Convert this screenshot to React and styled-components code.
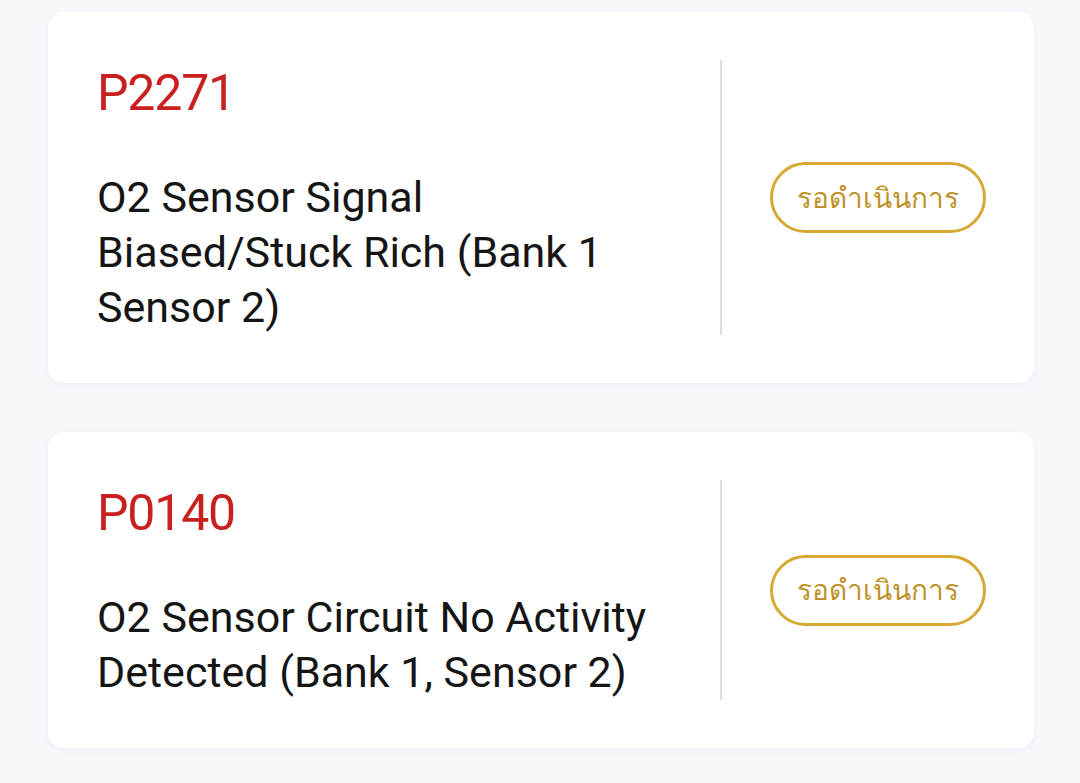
import React from 'react';
import styled, { createGlobalStyle } from 'styled-components';

const GlobalStyle = createGlobalStyle`
  body {
    margin: 0;
    background: #f5f7fb;
    font-family: Roboto, "Noto Sans", "Liberation Sans", sans-serif;
  }
`;

const codes = [
  {
    code: 'P2271',
    text: 'O2 Sensor Signal Biased/Stuck Rich (Bank 1 Sensor 2)',
    status: 'รอดำเนินการ',
  },
  {
    code: 'P0140',
    text: 'O2 Sensor Circuit No Activity Detected (Bank 1, Sensor 2)',
    status: 'รอดำเนินการ',
  },
];

export default function App() {
  return (
    <>
      <GlobalStyle />
      <List>
        {codes.map((item) => (
          <Card key={item.code}>
            <Info>
              <Code>{item.code}</Code>
              <Desc>{item.text}</Desc>
            </Info>
            <Divider />
            <Side>
              <Badge>{item.status}</Badge>
            </Side>
          </Card>
        ))}
      </List>
    </>
  );
}

const List = styled.div`
  display: flex;
  flex-direction: column;
  gap: 49px;
  padding: 12px 46px 20px 48px;
`;

const Card = styled.div`
  display: flex;
  align-items: stretch;
  background: #ffffff;
  border-radius: 16px;
  padding: 48px 48px 48px 49px;
  box-shadow: 0 2px 6px rgba(30, 40, 90, 0.04);
`;

const Info = styled.div`
  flex: 1;
  min-width: 0;
`;

const Code = styled.div`
  font-size: 50px;
  line-height: 66px;
  letter-spacing: -1.2px;
  color: #c8201f;
`;

const Desc = styled.div`
  max-width: 572px;
  margin-top: 44px;
  font-size: 43px;
  line-height: 55px;
  color: #151515;
`;

const Divider = styled.div`
  width: 2px;
  background: #dcdcec;
`;

const Side = styled.div`
  display: flex;
  align-items: center;
  padding-left: 48px;
`;

const Badge = styled.div`
  box-sizing: border-box;
  width: 216px;
  height: 71px;
  display: flex;
  align-items: center;
  justify-content: center;
  border: 3px solid #d6a834;
  border-radius: 36px;
  font-size: 28px;
  color: #bf9229;
`;
